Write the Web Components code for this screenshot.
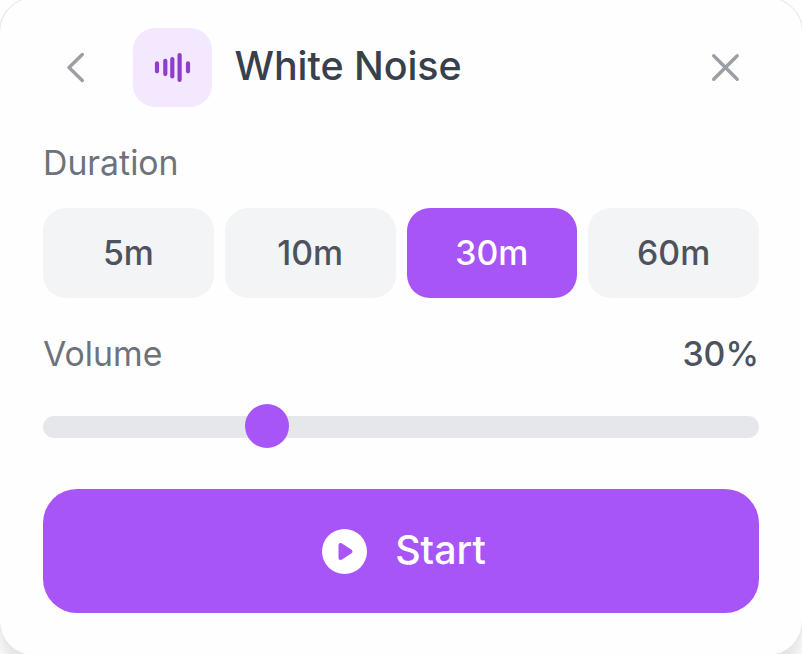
<!DOCTYPE html>
<html lang="en">
<head>
<meta charset="utf-8">
<title>White Noise</title>
<style>
  html, body { height: 100%; }
  body {
    margin: 0;
    overflow: hidden;
    background: #fefefe;
    font-family: Inter, "Liberation Sans", sans-serif;
  }
</style>
</head>
<body>
<noise-card>
  <noise-header slot="header">White Noise</noise-header>
  <noise-field label="Duration">
    <duration-group>
      <duration-option>5m</duration-option>
      <duration-option>10m</duration-option>
      <duration-option selected>30m</duration-option>
      <duration-option>60m</duration-option>
    </duration-group>
  </noise-field>
  <noise-field label="Volume" value="30%">
    <volume-slider value="30"></volume-slider>
  </noise-field>
  <start-button slot="footer">Start</start-button>
</noise-card>

<script>
class BaseElement extends HTMLElement {
  constructor() {
    super()

    const template = document.createElement('template')
    template.innerHTML = this.constructor.markup
    this.attachShadow({ mode: 'open' }).appendChild(template.content.cloneNode(true))
  }
}

class NoiseCard extends BaseElement {
  static get markup() {
    return `
      <style>
        :host {
          display: flex;
          flex-direction: column;
          box-sizing: border-box;
          width: 804px;
          height: 659px;
          margin: -3px 0 0 -1px;
          padding: 30px 43px 42px;
          border: 1px solid #e3e4e6;
          border-radius: 35px;
          background: #fefefe;
          box-shadow: 0 14px 14px rgba(0, 0, 0, 0.1);
        }
      </style>
      <slot name="header"></slot>
      <slot></slot>
      <slot name="footer"></slot>
    `
  }
}

customElements.define('noise-card', NoiseCard)

class NoiseHeader extends BaseElement {
  static get markup() {
    return `
      <style>
        :host {
          display: flex;
          align-items: center;
          height: 79px;
          margin-bottom: 33px;
          color: #38404c;
        }
        button {
          flex: none;
          width: 67px;
          height: 67px;
          padding: 0;
          border: 0;
          background: none;
          color: #9b9fa5;
        }
        svg {
          display: block;
          fill: none;
          stroke: currentColor;
          stroke-linecap: round;
          stroke-linejoin: round;
        }
        .icon {
          flex: none;
          width: 79px;
          height: 79px;
          margin: 0 23px;
          border-radius: 22px;
          background: #f3e8ff;
          color: #8e3dcc;
        }
        h1 {
          flex: 1;
          margin: 0;
          padding-bottom: 4px;
          font-size: 39.4px;
          font-weight: 500;
          line-height: 56px;
          letter-spacing: -0.05px;
          text-indent: -0.5px;
          white-space: nowrap;
        }
      </style>
      <button aria-label="Back">
        <svg width="67" height="67" viewBox="0 0 67 67" stroke-width="3.4"><path d="M39.300 20.500 26 33.500l13.300 13"/></svg>
      </button>
      <div class="icon">
        <svg width="79" height="79" viewBox="0 0 79 79" stroke-width="4.2"><path d="M24 35.300v8M32.300 32.800v13.300M39.300 31v17.500M46.600 27v25M55 35.300v8"/></svg>
      </div>
      <h1><slot></slot></h1>
      <button aria-label="Close">
        <svg width="67" height="67" viewBox="0 0 67 67" stroke-width="3.4"><path d="m21.700 21.700 23.500 23.500m0-23.500-23.500 23.500"/></svg>
      </button>
    `
  }
}

customElements.define('noise-header', NoiseHeader)

class NoiseField extends BaseElement {
  static get markup() {
    return `
      <style>
        :host {
          display: block;
          margin-bottom: 33px;
        }
        header {
          display: flex;
          justify-content: space-between;
          height: 45px;
          margin-bottom: 23px;
          font-size: 33.8px;
          line-height: 45px;
          color: #6e727b;
        }
        .value {
          font-weight: 500;
          color: #4d525d;
        }
      </style>
      <header><span class="label"></span><span class="value"></span></header>
      <slot></slot>
    `
  }

  static get observedAttributes() {
    return ['label', 'value']
  }

  attributeChangedCallback(name, oldValue, newValue) {
    if (oldValue === newValue) return
    this.shadowRoot.querySelector(`.${name}`).textContent = newValue
  }
}

customElements.define('noise-field', NoiseField)

class DurationGroup extends BaseElement {
  static get markup() {
    return `
      <style>
        :host {
          display: grid;
          grid-template-columns: repeat(4, 1fr);
          gap: 11px;
        }
      </style>
      <slot></slot>
    `
  }
}

customElements.define('duration-group', DurationGroup)

class DurationOption extends BaseElement {
  static get markup() {
    return `
      <style>
        :host {
          display: flex;
          align-items: center;
          justify-content: center;
          box-sizing: border-box;
          height: 90px;
          padding-bottom: 2px;
          border-radius: 23px;
          background: #f3f4f6;
          color: #4d525d;
          font-size: 33.8px;
          font-weight: 500;
        }
        :host([selected]) {
          background: #a855f7;
          color: #fff;
        }
      </style>
      <slot></slot>
    `
  }
}

customElements.define('duration-option', DurationOption)

class VolumeSlider extends BaseElement {
  static get markup() {
    return `
      <style>
        :host {
          display: block;
          padding: 17px 0 18px;
        }
        .track {
          position: relative;
          height: 22px;
          border-radius: 11px;
          background: #e5e7eb;
        }
        /* the thumb stays inside the track at both ends */
        .thumb {
          position: absolute;
          top: -12px;
          left: calc((100% - 44px) * var(--value, 0) / 100);
          width: 44px;
          height: 44px;
          border-radius: 50%;
          background: #a855f7;
        }
      </style>
      <div class="track"><div class="thumb"></div></div>
    `
  }

  static get observedAttributes() {
    return ['value']
  }

  attributeChangedCallback(name, oldValue, newValue) {
    this.shadowRoot.querySelector('.thumb').style.setProperty('--value', newValue)
  }
}

customElements.define('volume-slider', VolumeSlider)

class StartButton extends BaseElement {
  static get markup() {
    return `
      <style>
        :host {
          display: block;
        }
        button {
          display: flex;
          align-items: center;
          justify-content: center;
          gap: 28px;
          width: 100%;
          height: 124px;
          padding: 0 0 0 6px;
          border: 0;
          border-radius: 34px;
          background: #a855f7;
          color: #fff;
          font: 500 39.4px Inter, "Liberation Sans", sans-serif;
        }
        span {
          padding-bottom: 2px;
        }
      </style>
      <button>
        <svg width="45" height="45" viewBox="0 0 45 45">
          <circle cx="22.5" cy="22.5" r="22.5" fill="#fff"/>
          <path d="M18.500 16v13l10-6.500z" fill="#a855f7" stroke="#a855f7" stroke-width="4" stroke-linejoin="round"/>
        </svg>
        <span><slot></slot></span>
      </button>
    `
  }
}

customElements.define('start-button', StartButton)
</script>
</body>
</html>
